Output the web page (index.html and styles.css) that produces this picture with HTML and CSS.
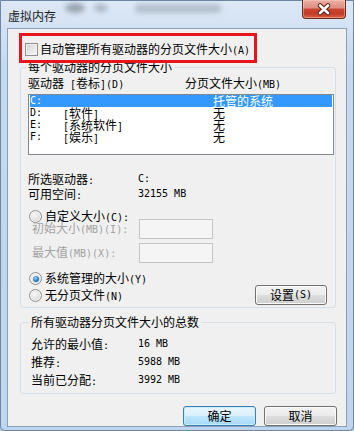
FILE: index.html
```html
<!DOCTYPE html>
<html lang="zh-CN">
<head>
<meta charset="utf-8">
<title>虚拟内存</title>
<link rel="stylesheet" href="styles.css">
</head>
<body>
<div class="window">
  <div class="titlebar">
    <span class="blur b1"></span><span class="blur b2"></span><span class="blur b3"></span>
    <div class="title">虚拟内存</div>
    <div class="close">
      <svg width="44" height="19" viewBox="0 0 44 19">
        <path d="M18 5.5 L26 13 M26 5.5 L18 13" stroke="#5a1f14" stroke-width="4.6" stroke-linecap="round" fill="none"/>
        <path d="M18 5.5 L26 13 M26 5.5 L18 13" stroke="#ffffff" stroke-width="2.6" stroke-linecap="round" fill="none"/>
      </svg>
    </div>
  </div>
  <div class="client">
    <div class="mark"></div>
    <div class="autorow">
      <span class="cb"></span>
      <span class="txt">自动管理所有驱动器的分页文件大小<span class="a">(A)</span></span>
    </div>

    <fieldset class="grp grp1">
      <legend>每个驱动器的分页文件大小</legend>
      <div class="lhead">
        <span class="c1">驱动器<span class="a"> [</span>卷标<span class="a">](D)</span></span>
        <span>分页文件大小<span class="a">(MB)</span></span>
      </div>
      <div class="list">
        <div class="row sel"><span class="a">C:</span><span></span><span>托管的系统</span></div>
        <div class="row"><span class="a">D:</span><span><span class="a">[</span>软件<span class="a">]</span></span><span>无</span></div>
        <div class="row"><span class="a">E:</span><span><span class="a">[</span>系统软件<span class="a">]</span></span><span>无</span></div>
        <div class="row"><span class="a">F:</span><span><span class="a">[</span>娱乐<span class="a">]</span></span><span>无</span></div>
      </div>
      <div class="info">
        <div class="irow"><span class="lab">所选驱动器<span class="a">:</span></span><span class="a">C:</span></div>
        <div class="irow"><span class="lab">可用空间<span class="a">:</span></span><span class="a">32155 MB</span></div>
      </div>
      <div class="rrow r1"><span class="radio"></span><span class="rt">自定义大小<span class="a">(C):</span></span></div>
      <div class="frow f1"><span class="flab dis">初始大小<span class="a">(MB)(I):</span></span><span class="edit"></span></div>
      <div class="frow f2"><span class="flab dis">最大值<span class="a">(MB)(X):</span></span><span class="edit"></span></div>
      <div class="rrow r2"><span class="radio on"></span><span class="rt">系统管理的大小<span class="a">(Y)</span></span></div>
      <div class="rrow r3"><span class="radio"></span><span class="rt">无分页文件<span class="a">(N)</span></span><span class="btn set">设置<span class="a">(S)</span></span></div>
    </fieldset>

    <fieldset class="grp grp2">
      <legend>所有驱动器分页文件大小的总数</legend>
      <div class="trow"><span class="tlab">允许的最小值<span class="a">:</span></span><span class="a">16 MB</span></div>
      <div class="trow"><span class="tlab">推荐<span class="a">:</span></span><span class="a">5988 MB</span></div>
      <div class="trow"><span class="tlab">当前已分配<span class="a">:</span></span><span class="a">3992 MB</span></div>
    </fieldset>

    <div class="buttons">
      <span class="btn def">确定</span>
      <span class="btn">取消</span>
    </div>
  </div>
</div>
</body>
</html>
```
FILE: styles.css
```css
* { box-sizing: border-box; }
html, body { margin: 0; padding: 0; }
body {
  width: 354px;
  height: 431px;
  overflow: hidden;
  font-family: "Noto Sans CJK SC", "Noto Sans CJK JP", sans-serif;
  font-size: 12px;
  color: #000;
  background: #a9c3e0;
}
.a {
  font-family: "DejaVu Sans Mono", "Liberation Mono", monospace;
  font-size: 10px;
}
.window {
  width: 354px;
  height: 431px;
  display: flex;
  flex-direction: column;
  border: 1px solid #6d86a6;
  border-radius: 0 0 5px 5px;
  background: linear-gradient(180deg, #dde8f5 0px, #d3e2f3 27px, #c6daef 60px, #bfd5ed 100%);
}
.titlebar {
  position: relative;
  height: 27px;
  display: flex;
  justify-content: space-between;
  align-items: flex-start;
  flex: none;
}
.blur {
  position: absolute;
  border-radius: 50%;
  filter: blur(2.5px);
}
.b1 { left: 64px; top: 2px; width: 20px; height: 10px; background: rgba(80, 88, 100, 0.45); }
.b2 { left: 93px; top: 3px; width: 14px; height: 8px; background: rgba(90, 98, 110, 0.35); }
.b3 { left: 134px; top: 3px; width: 86px; height: 9px; background: rgba(110, 120, 135, 0.35); border-radius: 4px; }
.title {
  position: relative;
  padding: 8px 0 0 7px;
  line-height: 14px;
  color: #1b1b1b;
}
.close {
  position: relative;
  width: 44px;
  height: 19px;
  margin: -1px 7px 0 0;
  border: 1px solid #6b2a1f;
  border-top: none;
  border-radius: 0 0 4px 4px;
  background: linear-gradient(180deg, #eab0a4 0%, #dd8e7f 45%, #c8452f 50%, #c33c27 75%, #d6603f 100%);
  box-shadow: inset 0 0 0 1px rgba(255, 210, 200, 0.45);
}
.close svg { position: absolute; left: -1px; top: 0; }
.client {
  position: relative;
  flex: 1;
  margin: 0 6px 7px 6px;
  border: 1px solid #8a9fbb;
  background: #f0f0f0;
  display: flex;
  flex-direction: column;
}
.mark {
  position: absolute;
  left: 11px;
  top: 4px;
  width: 238px;
  height: 30px;
  border: 3px solid #e8141b;
  z-index: 2;
}
.autorow {
  display: flex;
  align-items: center;
  padding: 14px 0 0 17px;
  height: 27px;
  line-height: 13px;
}
.cb {
  width: 13px;
  height: 13px;
  border: 1px solid #8e8f8f;
  background: linear-gradient(135deg, #cfd2d6 0%, #e6e7e9 55%, #f7f7f7 100%);
  box-shadow: inset 0 0 0 1px #f2f2f2;
}
.txt { margin-left: 2px; }

.grp {
  margin: 5px 0 0 12px;
  width: 316px;
  border: 1px solid #d5dfe5;
  border-radius: 3px;
  min-width: 0;
}
.grp legend {
  line-height: 12px;
  padding: 0 2px;
  margin-left: -2px;
}
.grp1 { padding: 4px 0 2px 7px; }
.lhead {
  display: flex;
  line-height: 12px;
}
.lhead .c1 { width: 157px; }
.list {
  margin-top: 3px;
  width: 306px;
  height: 61px;
  border: 1px solid #828790;
  background: #fff;
  padding: 0 1px;
}
.row {
  display: grid;
  grid-template-columns: 33px 150px 1fr;
  line-height: 12px;
  height: 12px;
}
.row.sel { background: #3399ff; color: #fff; }
.info { margin-top: 17px; }
.irow { display: flex; line-height: 13px; }
.irow .lab { width: 110px; }
.rrow {
  display: flex;
  align-items: center;
  height: 13px;
  line-height: 13px;
}
.r1 { margin-top: 8px; }
.r2 { margin-top: 9px; }
.r3 { height: 20px; }
.radio {
  width: 13px;
  height: 13px;
  margin-left: 1px;
  border-radius: 50%;
  border: 1px solid #8e8f8f;
  background: radial-gradient(circle at 40% 35%, #f7f7f7 0%, #e6e6e6 45%, #c9cbce 100%);
  box-shadow: inset 0 0 0 1px #f4f4f4;
  position: relative;
  flex: none;
}
.radio.on::after {
  content: "";
  position: absolute;
  left: 2.5px;
  top: 2.5px;
  width: 6px;
  height: 6px;
  border-radius: 50%;
  background: radial-gradient(circle at 40% 35%, #9fd6f7 0%, #3a8bd0 45%, #12498a 100%);
}
.rt { margin-left: 3px; }
.frow {
  display: flex;
  align-items: center;
  height: 20px;
}
.f1 { margin-top: -4px; }
.f2 { margin-top: 4px; }
.flab {
  width: 111px;
  padding-left: 4px;
  line-height: 12px;
}
.dis { color: #a2a2a2; }
.edit {
  width: 74px;
  height: 20px;
  border: 1px solid #c2c4c6;
  background: #f5f5f5;
}
.btn {
  display: flex;
  align-items: center;
  justify-content: center;
  width: 73px;
  height: 20px;
  line-height: 12px;
  border: 1px solid #707070;
  border-radius: 3px;
  background: linear-gradient(180deg, #f3f3f3 0%, #ebebeb 48%, #dddddd 52%, #cfcfcf 100%);
  box-shadow: inset 0 0 0 1px #fbfbfb;
}
.btn.set { width: 72px; margin: 0 8px 0 auto; }
.btn.def {
  border-color: #3c7fb1;
  background: linear-gradient(180deg, #eaf6fd 0%, #d9f0fc 48%, #bee6fd 52%, #a7d9f5 100%);
  box-shadow: inset 0 0 0 1px #c9ecfd;
}
.grp2 {
  margin-top: 8px;
  padding: 8px 0 3px 10px;
}
.trow { display: flex; line-height: 16px; }
.tlab { width: 107px; }
.buttons {
  display: flex;
  justify-content: flex-end;
  gap: 8px;
  margin-top: 12px;
  padding-right: 9px;
}
```
